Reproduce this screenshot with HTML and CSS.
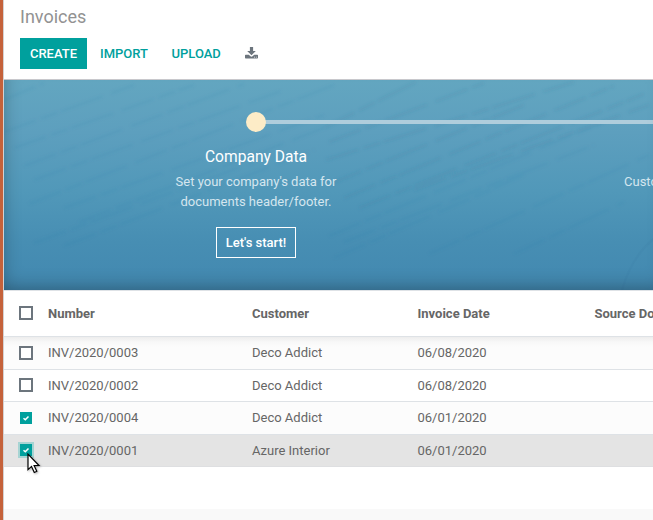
FILE: index.html
```html
<!DOCTYPE html>
<html lang="en">
<head>
<meta charset="utf-8">
<title>Invoices</title>
<link rel="stylesheet" href="styles.css">
</head>
<body>
<div class="app">
  <header class="control-panel">
    <h1 class="title">Invoices</h1>
    <div class="actions">
      <button class="btn btn-primary">CREATE</button>
      <button class="btn btn-import">IMPORT</button>
      <button class="btn btn-upload">UPLOAD</button>
      <button class="btn-icon" aria-label="Export">
        <svg width="13" height="12" viewBox="0 0 13 12"><path fill="#6c757d" d="M4.9 0h3.2v4h2.7L6.5 8.2 2.2 4h2.7zM.7 7.7h3.1l1.4 1.4q1.3 1.1 2.6 0l1.4-1.4h3.1q.7 0 .7.7v2.4q0 .7-.7.7H.7q-.7 0-.7-.7V8.400q0-.7.7-.7zM9 9.700v.8h.9v-.8zM10.900 9.700v.8h.9v-.8z" fill-rule="evenodd"/></svg>
      </button>
    </div>
  </header>

  <section class="onboarding">
    <svg class="texture" width="649" height="210" viewBox="0 0 649 210">
      <defs><filter id="soft" x="-5%" y="-5%" width="110%" height="110%"><feGaussianBlur stdDeviation="1.6"/></filter></defs>
      <g filter="url(#soft)">
        <path class="streaks faint" d="M0 20L40 3M0 52L130 5M10 68L190 5M20 86L240 4M30 100L280 10M25 124L330 5M60 128L320 35M75 142L325 46M30 163L250 82M60 166L310 70"/>
        <path class="streaks" d="M320 48L412 2M325 62L480 3M322 80L570 2M326 104L520 25M340 118L610 6M355 128L640 14M410 110L645 25"/>
        <path class="streaks faint" d="M325 156L600 42M340 162L590 65M330 178L520 95M425 174L645 75M510 174L620 122"/>
      </g>
      <path class="curve" d="M618 210Q628 175 652 157"/>
    </svg>
    <div class="steps">
      <div class="step">
        <div class="marker"><span class="line line-first"></span><span class="dot"></span></div>
        <h2 class="step-title">Company Data</h2>
        <p class="step-text">Set your company's data for<br>documents header/footer.</p>
        <button class="step-btn">Let's start!</button>
      </div>
      <div class="step">
        <div class="marker"><span class="line"></span></div>
        <h2 class="step-title">&nbsp;</h2>
        <p class="step-text step-text-cut">Customize</p>
      </div>
    </div>
  </section>

  <main class="list">
    <div class="row head"><span class="check"></span><span>Number</span><span>Customer</span><span>Invoice Date</span><span>Source Document</span></div>
    <div class="row odd first"><span class="check"></span><span>INV/2020/0003</span><span>Deco Addict</span><span>06/08/2020</span></div>
    <div class="row even"><span class="check"></span><span>INV/2020/0002</span><span>Deco Addict</span><span>06/08/2020</span></div>
    <div class="row odd"><span class="check checked"><svg width="12" height="12" viewBox="0 0 12 12"><path d="M3.500 6.200L5.300 7.800L8.500 4.400"/></svg></span><span>INV/2020/0004</span><span>Deco Addict</span><span>06/01/2020</span></div>
    <div class="row even hover"><span class="check checked focus"><svg width="12" height="12" viewBox="0 0 12 12"><path d="M3.500 6.200L5.300 7.800L8.500 4.400"/></svg></span><span>INV/2020/0001</span><span>Azure Interior</span><span>06/01/2020</span></div>
    <div class="blank"></div>
    <div class="foot"></div>
  </main>
</div>
<svg class="cursor" width="14" height="21" viewBox="0 0 14 21"><path d="M1 1.200V16.600L4.500 13.400L7.300 19.500L9.800 18.300L7.100 12.500H12z" fill="#fff" stroke="#000" stroke-width="1.200"/></svg>
</body>
</html>
```

FILE: styles.css
```css
* { box-sizing: border-box; }
body {
  margin: 0;
  width: 653px;
  height: 520px;
  overflow: hidden;
  font-family: Roboto, "Liberation Sans", sans-serif;
  font-size: 13px;
  color: #666;
  background: #fff;
}
button { font-family: inherit; font-size: 13px; background: none; border: 0; padding: 0; margin: 0; }
.app { height: 520px; overflow: hidden; border-left: 3px solid #c5623b; box-shadow: inset 1px 0 #d5d2d2; padding-left: 1px; }

.control-panel { height: 80px; padding: 6px 16px 0; border-bottom: 1px solid #c8c8cc; }
.title { margin: 0; font-size: 18px; line-height: 22px; font-weight: 400; color: #929292; }
.actions { display: flex; margin-top: 10px; height: 31px; align-items: center; }
.btn { height: 31px; font-weight: 500; color: #00a09d; text-align: left; white-space: nowrap; }
.btn-primary { width: 67px; background: #00a09d; color: #fff; text-align: center; }
.btn-import { width: 71.5px; margin-left: 13px; }
.btn-upload { width: 73px; }
.btn-icon { width: 13px; height: 12px; margin-bottom: 1px; }
.btn-icon svg { display: block; }

.onboarding {
  position: relative;
  height: 210px;
  overflow: hidden;
  background: linear-gradient(#63a6c0, #5d9fbe 25%, #5198b9 53%, #478eb3 77%, #4288b0);
}
.onboarding::after {
  content: "";
  position: absolute;
  inset: 0;
  box-shadow: inset 6px -10px 20px -10px rgba(0, 0, 0, .38);
}
.texture { position: absolute; left: 0; top: 0; }
.streaks { fill: none; stroke: #326e91; stroke-width: 3; stroke-opacity: .12; stroke-dasharray: 34 5 18 3 45 9; }
.streaks.faint { stroke-opacity: .06; }
.curve { fill: none; stroke: #3677a0; stroke-opacity: .14; stroke-width: 2; }
.steps { position: relative; display: grid; grid-template-columns: 420px 420px; padding: 32px 0 0 42px; }
.step { text-align: center; }
.marker { position: relative; height: 20px; display: flex; align-items: center; justify-content: center; }
.line { position: absolute; left: 0; right: 0; top: 8px; height: 4px; background: #afcddc; }
.line-first { left: 210px; }
.dot { position: relative; width: 20px; height: 20px; border-radius: 50%; background: #fdecc7; }
.step-title { margin: 15px 0 0; font-size: 15.6px; line-height: 20px; font-weight: 400; color: #fff; }
.step-text { margin: 5px 0 0; line-height: 20px; color: #d5e6ef; }
.step-text-cut { text-align: left; padding-left: 158px; }
.step-btn { width: 80px; height: 31px; margin-top: 15px; border: 1px solid #fff; color: #fff; font-weight: 500; }

.row {
  display: grid;
  grid-template-columns: 14px 204px 165.5px 177px 150px;
  align-items: center;
  height: 33px;
  padding-left: 15px;
  border-bottom: 1px solid #dee2e6;
  line-height: 20px;
}
.row.even { height: 32px; }
.row.even > span:not(.check) { padding-top: 1px; }
.row.even .check { margin-bottom: 2px; }
.row > span:nth-child(n+2) { padding-left: 15px; }
.row.head { height: 47px; border-top: 1px solid #dee2e6; font-weight: 700; }
.row.head .check { margin-bottom: 1px; }
.row.odd { background: #fcfcfc; }
.row.first { background: linear-gradient(#ededed, #f8f8f8 5px, #fcfcfc 10px); }
.row.hover { background: #e4e4e4; border-bottom-color: #dedfe1; }
.check { width: 14px; height: 14px; border: 2px solid #6c757d; background: #fff; }
.check.checked { width: 12px; height: 12px; margin-left: 1px; border: 0; background: #00a09d; }
.check.focus { box-shadow: 0 0 0 2px #a6d4d3; }
.check svg { display: block; }
.check path { fill: none; stroke: #fff; stroke-width: 1.500; }
.blank { height: 42px; }
.foot { height: 20px; background: #f9f9f9; }
.cursor { position: absolute; left: 27px; top: 453px; filter: drop-shadow(1px 1px 1px rgba(0, 0, 0, .3)); }
```
